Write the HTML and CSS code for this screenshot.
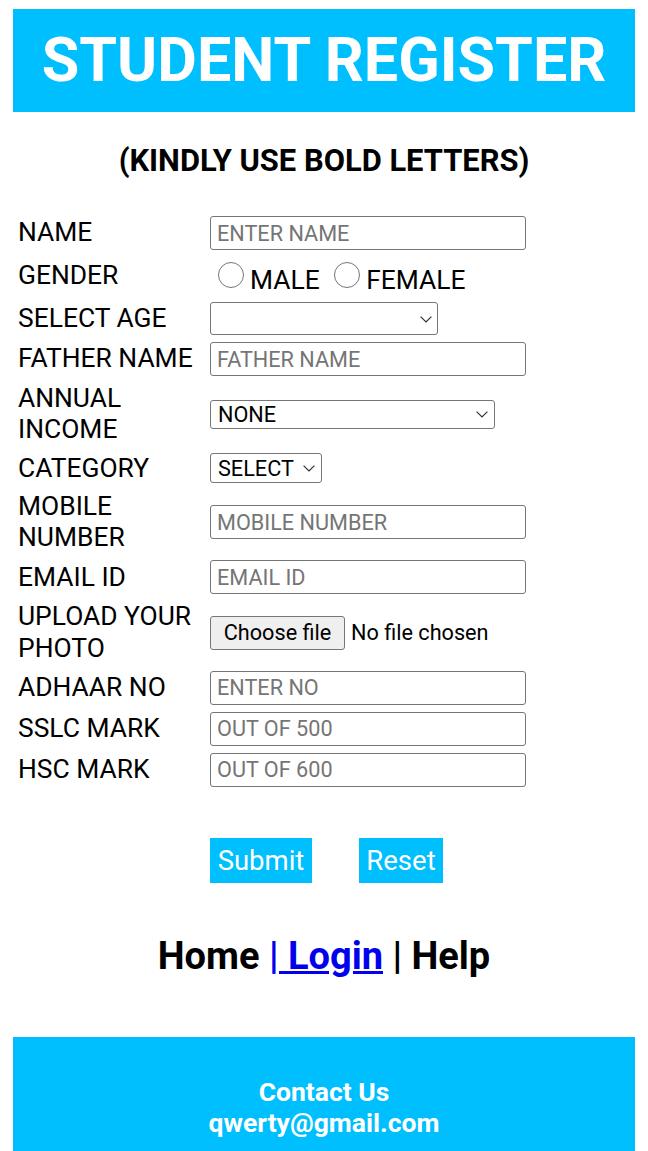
FILE: index.html
```html
<!DOCTYPE html>
<html lang="en">
<head>
<meta charset="utf-8">
<title>Student Register</title>
<link rel="stylesheet" href="styles.css">
</head>
<body>
<header class="banner"><h1 class="title">STUDENT REGISTER</h1></header>
<h3 class="note">(KINDLY USE BOLD LETTERS)</h3>
<form class="reg">
  <table class="grid">
    <tr><td class="lbl">NAME</td><td><input class="field" type="text" placeholder="ENTER NAME"></td></tr>
    <tr><td class="lbl">GENDER</td><td><div class="radios"><label><input class="radio" type="radio" name="gender">MALE</label> <label><input class="radio" type="radio" name="gender">FEMALE</label></div></td></tr>
    <tr><td class="lbl">SELECT AGE</td><td><span class="sel sel-age"><select><option></option></select><svg viewBox="0 0 12 7"><path d="M0.6 0.6 L6 6 L11.4 0.6" /></svg></span></td></tr>
    <tr><td class="lbl">FATHER NAME</td><td><input class="field" type="text" placeholder="FATHER NAME"></td></tr>
    <tr><td class="lbl">ANNUAL INCOME</td><td><span class="sel sel-income"><select><option>NONE</option></select><svg viewBox="0 0 12 7"><path d="M0.6 0.6 L6 6 L11.4 0.6" /></svg></span></td></tr>
    <tr><td class="lbl">CATEGORY</td><td><span class="sel sel-cat"><select><option>SELECT</option></select><svg viewBox="0 0 12 7"><path d="M0.6 0.6 L6 6 L11.4 0.6" /></svg></span></td></tr>
    <tr><td class="lbl">MOBILE NUMBER</td><td><input class="field" type="text" placeholder="MOBILE NUMBER"></td></tr>
    <tr><td class="lbl">EMAIL ID</td><td><input class="field" type="text" placeholder="EMAIL ID"></td></tr>
    <tr><td class="lbl">UPLOAD YOUR PHOTO</td><td><label class="file"><span class="file-btn">Choose file</span><span class="file-name">No file chosen</span></label></td></tr>
    <tr><td class="lbl">ADHAAR NO</td><td><input class="field" type="text" placeholder="ENTER NO"></td></tr>
    <tr><td class="lbl">SSLC MARK</td><td><input class="field" type="text" placeholder="OUT OF 500"></td></tr>
    <tr><td class="lbl">HSC MARK</td><td><input class="field" type="text" placeholder="OUT OF 600"></td></tr>
  </table>
  <div class="actions">
    <button class="btn btn-submit" type="submit">Submit</button>
    <button class="btn btn-reset" type="reset">Reset</button>
  </div>
</form>
<h2 class="nav">Home <a class="nav-link" href="#">| Login</a> | Help</h2>
<footer class="foot">
  <p class="foot-line">Contact Us</p>
  <p class="foot-line">qwerty@gmail.com</p>
</footer>
</body>
</html>
```
FILE: styles.css
```css
* { box-sizing: border-box; }

body {
  margin: 9px 13px 0;
  font-family: Roboto, "Liberation Sans", Arial, sans-serif;
  font-size: 26.4px;
  color: #000;
  background: #fff;
}

.banner {
  background: #00bfff;
  padding: 16px 0 17px;
  text-align: center;
}

.title {
  margin: 0;
  font-size: 61px;
  font-weight: 700;
  line-height: 70px;
  color: #fff;
}

.note {
  margin: 31px 0 32px;
  font-size: 30.9px;
  font-weight: 700;
  line-height: 36px;
  text-align: center;
}

.reg { margin: 0; }

.grid {
  border-spacing: 3px;
  margin: 0;
}

.grid td {
  padding: 2px;
  vertical-align: middle;
  line-height: 31.25px;
}

.lbl { width: 189px; }

.field {
  display: block;
  width: 316px;
  height: 34px;
  margin: 0;
  padding: 0 6px;
  border: 1px solid #767676;
  border-radius: 3px;
  background: #fff;
  font-family: Roboto, "Liberation Sans", Arial, sans-serif;
  font-size: 21.67px;
  color: #000;
}

.field::placeholder { color: #757575; opacity: 1; }

.radios {
  height: 38px;
  padding-top: 5px;
  line-height: 31px;
  white-space: nowrap;
}

.radio {
  appearance: none;
  -webkit-appearance: none;
  display: inline-block;
  width: 26px;
  height: 26px;
  margin: 0 6px 1px 8px;
  border: 1.6px solid #767676;
  border-radius: 50%;
  background: #fff;
  vertical-align: baseline;
}

.sel {
  position: relative;
  display: block;
}

.sel select {
  appearance: none;
  -webkit-appearance: none;
  display: block;
  width: 100%;
  height: 100%;
  margin: 0;
  padding: 0 24px 0 7px;
  border: 1px solid #767676;
  border-radius: 3px;
  background: #fff;
  font-family: Roboto, "Liberation Sans", Arial, sans-serif;
  font-size: 21.67px;
  color: #000;
}

.sel svg {
  position: absolute;
  right: 7px;
  top: 50%;
  width: 12px;
  height: 7px;
  margin-top: -3px;
  pointer-events: none;
  fill: none;
  stroke: #333;
  stroke-width: 1.2;
}

.sel-age { width: 228px; height: 33px; }
.sel-age svg { right: 6px; }
.sel-income { width: 285px; height: 29px; }
.sel-cat { width: 112px; height: 30px; }

.file {
  display: flex;
  align-items: center;
  white-space: nowrap;
}

.file-btn {
  display: flex;
  align-items: center;
  justify-content: center;
  width: 135px;
  height: 34px;
  border: 1px solid #767676;
  border-radius: 3px;
  background: #efefef;
  font-size: 21.67px;
  color: #000;
}

.file-name {
  margin-left: 6px;
  font-size: 21.67px;
}

.actions {
  display: flex;
  gap: 47px;
  margin-top: 46px;
  padding-left: 197px;
}

.btn {
  height: 45px;
  margin: 0;
  padding: 0;
  border: 0;
  background: #00bfff;
  color: #fff;
  font-family: Roboto, "Liberation Sans", Arial, sans-serif;
  font-size: 27.5px;
}

.btn-submit { width: 102px; }
.btn-reset { width: 84px; }

.nav {
  margin: 51px 0 0;
  font-size: 38px;
  font-weight: 700;
  line-height: 45px;
  text-align: center;
}

.nav-link { color: #0000ee; text-decoration: underline; }

.foot {
  margin-top: 58px;
  padding: 39px 0 12px;
  background: #00bfff;
  color: #fff;
  text-align: center;
  font-weight: 700;
  font-size: 26.5px;
  line-height: 31.5px;
}

.foot-line { margin: 0; }
```
